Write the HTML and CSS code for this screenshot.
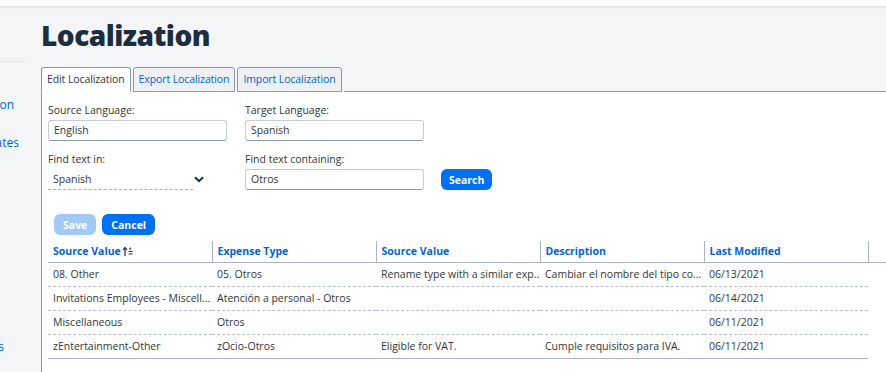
FILE: index.html
```html
<!DOCTYPE html>
<html>
<head>
<meta charset="utf-8">
<link rel="stylesheet" href="styles.css">
</head>
<body>
<div class="topbar"></div>
<div class="layout">
  <nav class="sidebar">
    <div class="side-sep"></div>
    <a class="side-item first">Localization</a>
    <a class="side-item second">Expense Templates</a>
    <a class="side-item third">Settings</a>
  </nav>
  <main class="main">
    <h1 class="title">Localization</h1>
    <div class="tabs">
      <div class="tab active">Edit Localization</div>
      <div class="tab">Export Localization</div>
      <div class="tab">Import Localization</div>
      <div class="tab-fill"></div>
    </div>
    <section class="panel">
      <div class="form-grid">
        <div class="field">
          <label class="label">Source Language:</label>
          <div class="input">English</div>
        </div>
        <div class="field">
          <label class="label">Target Language:</label>
          <div class="input">Spanish</div>
        </div>
        <div></div>
        <div class="field">
          <label class="label">Find text in:</label>
          <div class="select-row">
            <div class="select">Spanish</div>
            <svg class="chev" width="10" height="7" viewBox="0 0 10 7"><path d="M1 1.2 L5 5.2 L9 1.2" fill="none" stroke="#1d2d3e" stroke-width="2"/></svg>
          </div>
        </div>
        <div class="field">
          <label class="label">Find text containing:</label>
          <div class="input">Otros</div>
        </div>
        <div class="field bottom">
          <button class="btn search">Search</button>
        </div>
      </div>
      <div class="actions">
        <button class="btn disabled">Save</button>
        <button class="btn">Cancel</button>
      </div>
      <table class="grid">
        <thead>
          <tr>
            <th>Source Value<svg class="sort" width="11" height="10" viewBox="0 0 11 10"><path d="M3 10 V2 M1 4 L3 1.5 L5 4" fill="none" stroke="#1d2d3e" stroke-width="1.2"/><path d="M7 3.5 L8.2 1 L9.4 3.5 Z" fill="#1d2d3e"/><path d="M6.5 5.5 H10.5 M6.5 8 H10.5" stroke="#1d2d3e" stroke-width="1"/></svg></th>
            <th>Expense Type</th>
            <th>Source Value</th>
            <th>Description</th>
            <th>Last Modified</th>
            <th class="extra"></th>
          </tr>
        </thead>
        <tbody>
          <tr>
            <td>08. Other</td>
            <td>05. Otros</td>
            <td>Rename type with a similar exp...</td>
            <td>Cambiar el nombre del tipo co...</td>
            <td>06/13/2021</td>
            <td class="extra"></td>
          </tr>
          <tr>
            <td>Invitations Employees - Miscell...</td>
            <td>Atención a personal - Otros</td>
            <td></td>
            <td></td>
            <td>06/14/2021</td>
            <td class="extra"></td>
          </tr>
          <tr>
            <td>Miscellaneous</td>
            <td>Otros</td>
            <td></td>
            <td></td>
            <td>06/11/2021</td>
            <td class="extra"></td>
          </tr>
          <tr class="last">
            <td>zEntertainment-Other</td>
            <td>zOcio-Otros</td>
            <td>Eligible for VAT.</td>
            <td>Cumple requisitos para IVA.</td>
            <td>06/11/2021</td>
            <td class="extra"></td>
          </tr>
        </tbody>
      </table>
    </section>
  </main>
</div>
</body>
</html>
```

FILE: styles.css
```css
* { box-sizing: border-box; }
html, body { margin: 0; padding: 0; }
body {
  width: 886px;
  height: 372px;
  overflow: hidden;
  background: #f4f5f7;
  font-family: "Open Sans", "Noto Sans", sans-serif;
  font-size: 10.5px;
  color: #32363a;
}
.topbar {
  height: 6px;
  background: #ffffff;
  box-shadow: 0 1px 3px rgba(0,0,0,0.12);
  position: relative;
}
.layout {
  display: flex;
  height: 366px;
}
.sidebar {
  width: 41px;
  flex: none;
  overflow: hidden;
  display: flex;
  flex-direction: column;
  padding-top: 55px;
}
.side-sep {
  width: 26px;
  height: 1px;
  background: #e3e5e8;
  flex: none;
}
.side-item {
  display: flex;
  justify-content: flex-end;
  white-space: nowrap;
  color: #0064d9;
  font-size: 12px;
  line-height: 16px;
  flex: none;
}
.side-item.first { margin-top: 35px; padding-right: 27px; }
.side-item.second { margin-top: 22px; padding-right: 22px; }
.side-item.third { margin-top: 188px; padding-right: 37px; }
.main {
  flex: 1;
  display: flex;
  flex-direction: column;
  min-width: 0;
}
.title {
  margin: 9px 0 0 0;
  font-size: 28px;
  letter-spacing: -0.5px;
  line-height: 40px;
  font-weight: 800;
  color: #1d2d3e;
  height: 52px;
}
.tabs {
  display: flex;
  align-items: flex-end;
  height: 25px;
}
.tab {
  height: 25px;
  padding: 0 5px;
  margin-right: 2px;
  border: 1px solid #8b9aaa;
  border-radius: 3px 3px 0 0;
  background: #eef0f3;
  color: #0064d9;
  line-height: 22px;
  letter-spacing: -0.1px;
  white-space: nowrap;
}
.tab.active {
  background: #ffffff;
  color: #32363a;
  border-bottom-color: #ffffff;
}
.tab-fill {
  flex: 1;
  border-bottom: 1px solid #8b9aaa;
}
.panel {
  flex: 1;
  background: #ffffff;
  border-left: 1px solid #8b9aaa;
  padding: 10px 0 0 6px;
}
.form-grid {
  display: grid;
  grid-template-columns: 179px 179px auto;
  column-gap: 18px;
  row-gap: 10px;
  justify-content: start;
}
.field {
  display: flex;
  flex-direction: column;
}
.field.bottom { justify-content: flex-end; }
.label {
  line-height: 16px;
  margin-bottom: 2px;
}
.input {
  height: 21px;
  border: 1px solid #c6ccd2;
  border-bottom-color: #8c9aa7;
  border-radius: 3px;
  padding-left: 5px;
  line-height: 19px;
  color: #32363a;
}
.select-row {
  display: flex;
  align-items: center;
  height: 21px;
}
.select {
  width: 145px;
  height: 21px;
  padding-left: 5px;
  line-height: 21px;
  border-bottom: 1px dashed #a6b0ba;
}
.chev { margin-left: 1px; margin-top: -1px; }
.btn {
  font-family: inherit;
  font-size: 10.5px;
  font-weight: 700;
  color: #ffffff;
  background: #0070f2;
  border: none;
  border-radius: 6px;
  height: 21px;
  padding: 0 9px;
  align-self: flex-start;
}
.btn.search { padding: 0 8px; margin-left: -1px; }
.btn.disabled { background: #a3c9f6; }
.actions {
  display: flex;
  gap: 6px;
  margin: 24px 0 6px 6px;
}
.grid {
  border-collapse: collapse;
  table-layout: fixed;
  width: 838px;
}
.grid th, .grid td {
  width: 164px;
  padding: 0 0 0 5px;
  text-align: left;
  white-space: nowrap;
  overflow: hidden;
}
.grid th.extra, .grid td.extra { width: 18px; }
.grid th {
  height: 21px;
  color: #0064d9;
  font-weight: 700;
  border-bottom: 1px solid #a9b4be;
  border-right: 1px solid #a9b4be;
}
.grid th.extra { border-right: none; }
.grid td {
  height: 24px;
  border-bottom: 1px dashed #b5bdc6;
}
.grid td.extra { border-bottom: none; }
.grid tr.last td { border-bottom: 1px solid #a9b4be; }
.grid tr.last td.extra { border-bottom: none; }
.sort { margin-left: 1px; vertical-align: -1px; }
```
